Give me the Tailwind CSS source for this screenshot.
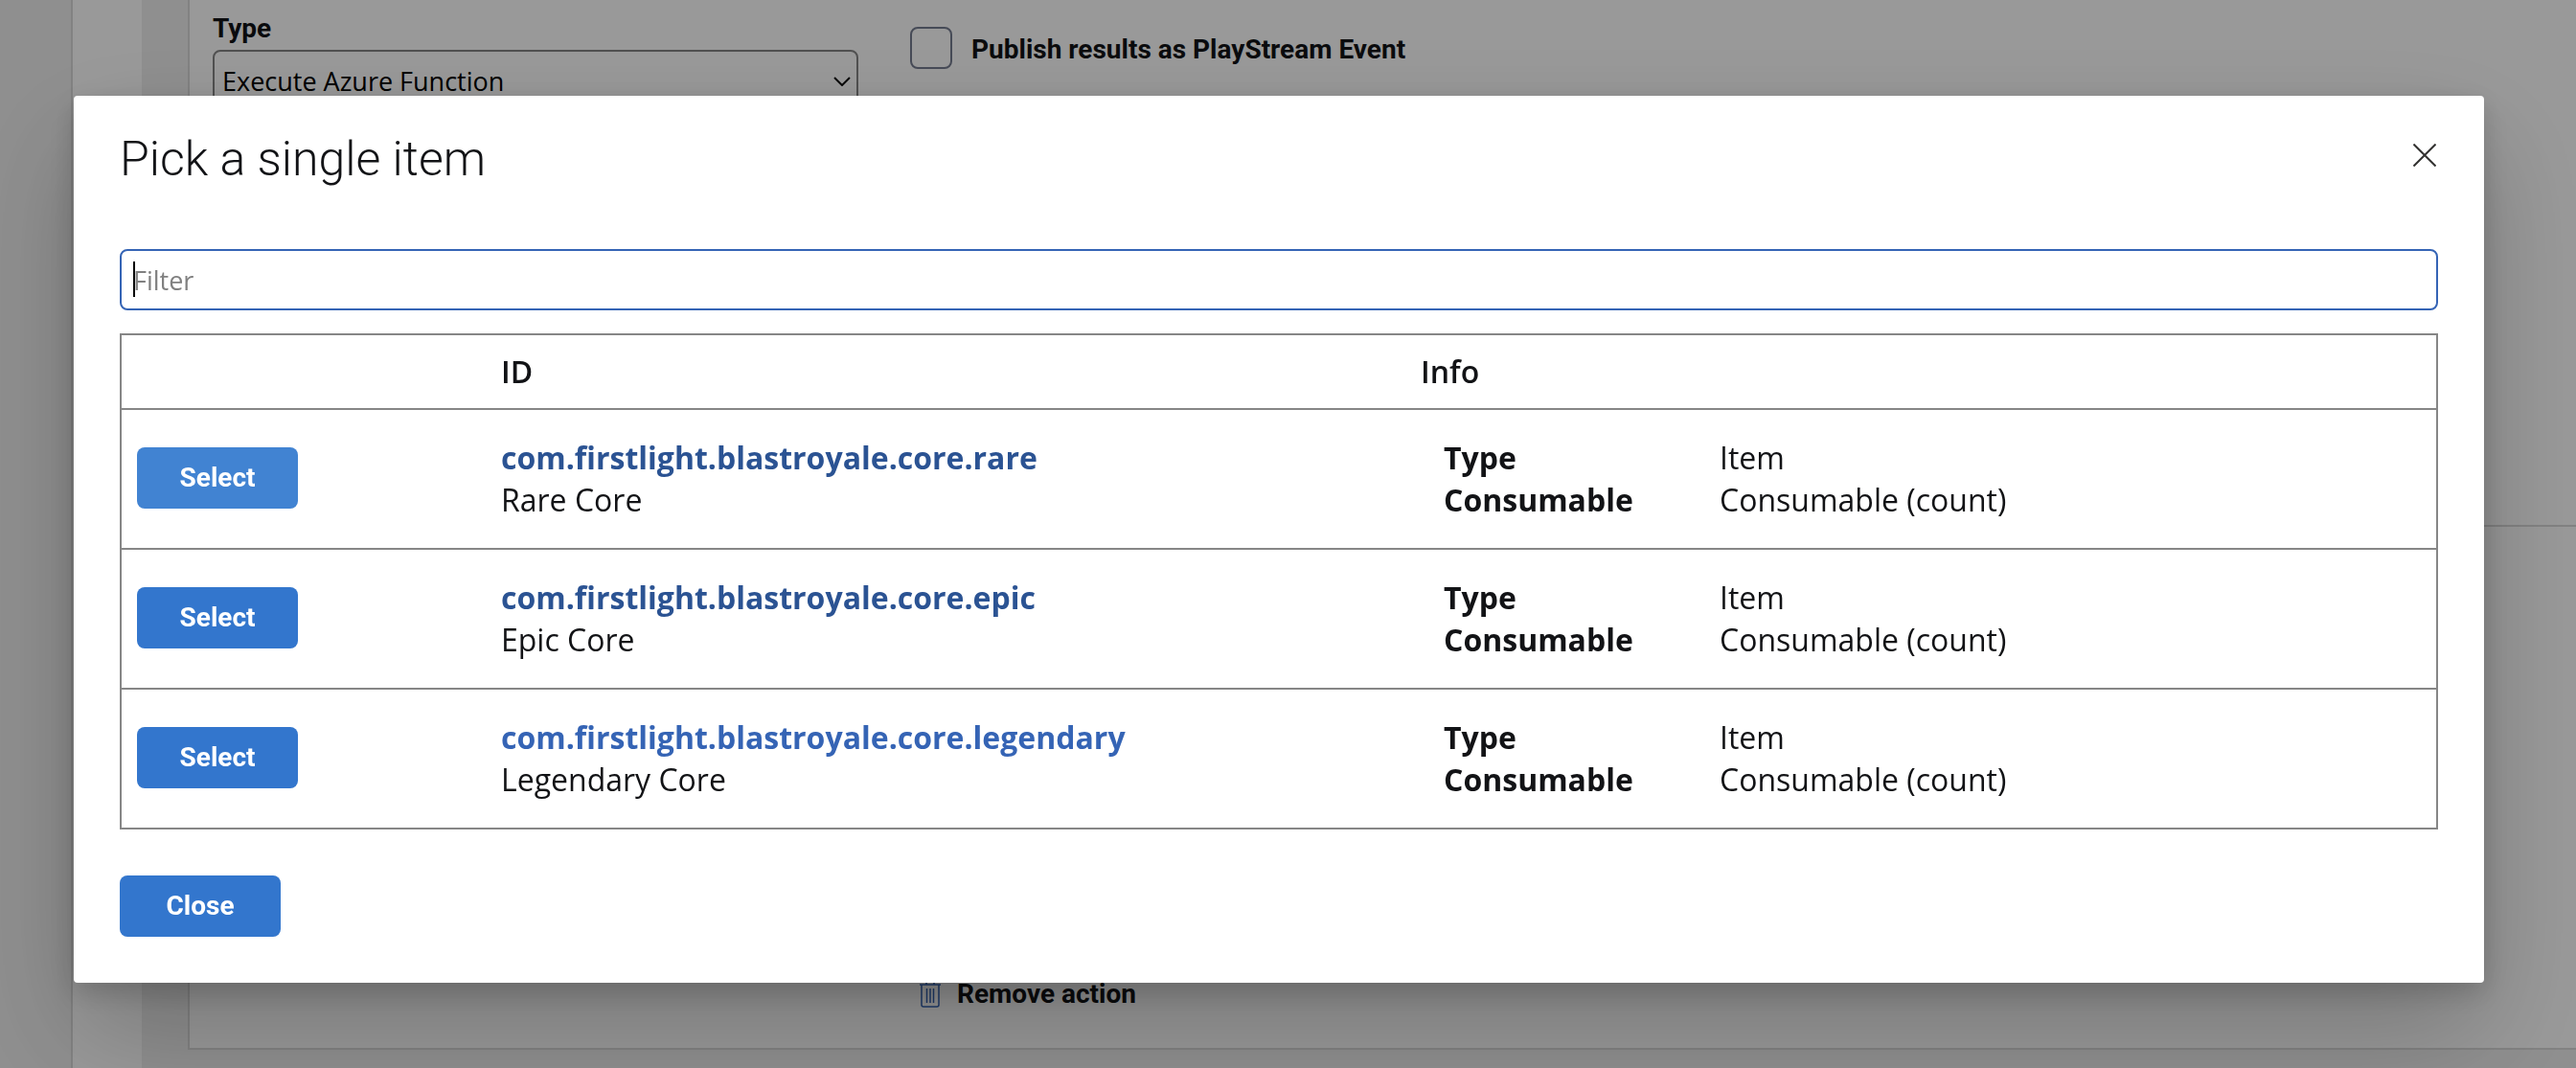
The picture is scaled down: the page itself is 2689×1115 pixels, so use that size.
<!DOCTYPE html>
<html lang="en">
<head>
<meta charset="utf-8">
<meta name="viewport" content="width=device-width, initial-scale=1">
<title>Pick a single item</title>
<script src="https://cdn.jsdelivr.net/npm/@tailwindcss/browser@4"></script>
</head>
<body class="h-screen overflow-hidden bg-[#efefef] font-['Open_Sans',sans-serif] text-[#121316]">

<!-- Page behind the dialog -->
<div class="flex h-screen overflow-hidden">
  <aside class="w-[76px] shrink-0 border-r-2 border-[#d9d9d9]"></aside>
  <div class="w-[72px] shrink-0 bg-white"></div>
  <main class="flex-1 pl-12 pb-[19px] flex flex-col">
    <div class="flex-1 flex flex-col border-l-2 border-b-2 border-[#d9d9d9] bg-white">
      <section class="h-[550px] border-b-2 border-[#d9d9d9] px-6 pt-3 grid grid-cols-[674px_1fr] gap-[54px] items-start">
        <div class="flex flex-col gap-1">
          <label for="type" class="font-['Roboto',sans-serif] font-bold text-[28px] leading-9">Type</label>
          <div class="relative">
            <select id="type" class="block w-full h-[66px] appearance-none rounded-lg border-2 border-[#868686] bg-white pl-2 text-[27px] leading-9 text-black">
              <option>Execute Azure Function</option>
            </select>
            <svg class="absolute right-2 top-7 w-[18px] h-[10px]" viewBox="0 0 18 10" fill="none" stroke="#111" stroke-width="2"><path d="M1 1l8 8 8-8"/></svg>
          </div>
        </div>
        <div class="flex items-start gap-5 pt-4">
          <input id="publish" type="checkbox" class="size-11 appearance-none rounded-lg border-2 border-[#767d91] bg-white">
          <label for="publish" class="pt-1.5 font-['Roboto',sans-serif] font-bold text-[28px] leading-9">Publish results as PlayStream Event</label>
        </div>
      </section>
      <section class="flex-1 px-6 pb-[38px] grid grid-cols-[674px_1fr] gap-[54px] items-end">
        <div></div>
        <button type="button" class="flex items-center gap-[17px] pl-2.5 font-['Roboto',sans-serif] font-bold text-[28px] leading-9">
          <svg class="w-[22px] h-7" viewBox="0 0 22 28" fill="none" stroke="#3564b5" stroke-width="1.5"><path d="M0 4h22M7 4V2q0-1 1-1h6q1 0 1 1v2M2 4v21q0 2 2 2h14q2 0 2-2V4M7.500 8v15M11 8v15M14.500 8v15"/></svg>
          Remove action
        </button>
      </section>
    </div>
  </main>
</div>

<!-- Dialog -->
<div class="fixed inset-0 bg-black/40 pt-[100px] pl-[77px] pr-24">
  <div role="dialog" aria-modal="true" aria-labelledby="title" class="rounded-sm bg-white px-12 pt-[38px] pb-12 shadow-[0_51px_115px_rgba(0,0,0,0.22),0_10px_29px_rgba(0,0,0,0.18)]">
    <header class="flex items-start justify-between">
      <h1 id="title" class="font-['Roboto',sans-serif] font-light text-[50px] leading-[56px]">Pick a single item</h1>
      <button type="button" aria-label="Close dialog" class="mt-3 mr-0.5">
        <svg class="block size-6" viewBox="0 0 24 24" fill="none" stroke="#323130" stroke-width="2"><path d="M0.500 0.500l23 23M23.500 0.500l-23 23"/></svg>
      </button>
    </header>

    <div class="relative mt-[66px]">
      <input type="text" aria-label="Filter" placeholder="Filter" class="block w-full h-16 rounded-lg border-2 border-[#3564b5] px-3 text-[27px] leading-9 placeholder:text-[#808080] outline-none">
      <span class="absolute left-3.5 top-[13px] w-0.5 h-[37px] bg-black"></span>
    </div>

    <table class="mt-6 w-full table-fixed border-separate border-spacing-0 border-2 border-[#868686] text-[32px] leading-[44px] text-left">
      <colgroup><col class="w-[380px]"><col class="w-[960px]"><col></colgroup>
      <thead>
        <tr>
          <th class="px-4 py-4"></th>
          <th class="px-4 py-4 font-semibold">ID</th>
          <th class="px-4 py-4 font-semibold">Info</th>
        </tr>
      </thead>
      <tbody>
        <tr>
          <td class="border-t-2 border-[#868686] px-4 pb-0.5 align-middle"><button type="button" class="block w-[168px] h-16 rounded-lg bg-[#4183d2] text-white font-['Roboto',sans-serif] font-bold text-[28px] leading-9">Select</button></td>
          <td class="border-t-2 border-[#868686] px-4 py-7"><a href="#" class="block font-bold text-[#2b5393]">com.firstlight.blastroyale.core.rare</a>Rare Core</td>
          <td class="border-t-2 border-[#868686] pl-10 pr-4 py-7"><dl class="grid grid-cols-[288px_1fr]"><dt class="font-bold">Type</dt><dd>Item</dd><dt class="font-bold">Consumable</dt><dd>Consumable (count)</dd></dl></td>
        </tr>
        <tr>
          <td class="border-t-2 border-[#868686] px-4 pb-0.5 align-middle"><button type="button" class="block w-[168px] h-16 rounded-lg bg-[#3376cd] text-white font-['Roboto',sans-serif] font-bold text-[28px] leading-9">Select</button></td>
          <td class="border-t-2 border-[#868686] px-4 py-7"><a href="#" class="block font-bold text-[#2b5393]">com.firstlight.blastroyale.core.epic</a>Epic Core</td>
          <td class="border-t-2 border-[#868686] pl-10 pr-4 py-7"><dl class="grid grid-cols-[288px_1fr]"><dt class="font-bold">Type</dt><dd>Item</dd><dt class="font-bold">Consumable</dt><dd>Consumable (count)</dd></dl></td>
        </tr>
        <tr>
          <td class="border-t-2 border-[#868686] px-4 pb-0.5 align-middle"><button type="button" class="block w-[168px] h-16 rounded-lg bg-[#3376cd] text-white font-['Roboto',sans-serif] font-bold text-[28px] leading-9">Select</button></td>
          <td class="border-t-2 border-[#868686] px-4 py-7"><a href="#" class="block font-bold text-[#3564b5]">com.firstlight.blastroyale.core.legendary</a>Legendary Core</td>
          <td class="border-t-2 border-[#868686] pl-10 pr-4 py-7"><dl class="grid grid-cols-[288px_1fr]"><dt class="font-bold">Type</dt><dd>Item</dd><dt class="font-bold">Consumable</dt><dd>Consumable (count)</dd></dl></td>
        </tr>
      </tbody>
    </table>

    <button type="button" class="mt-12 block w-[168px] h-16 rounded-lg bg-[#3376cd] text-white font-['Roboto',sans-serif] font-bold text-[28px] leading-9">Close</button>
  </div>
</div>
</body>
</html>
